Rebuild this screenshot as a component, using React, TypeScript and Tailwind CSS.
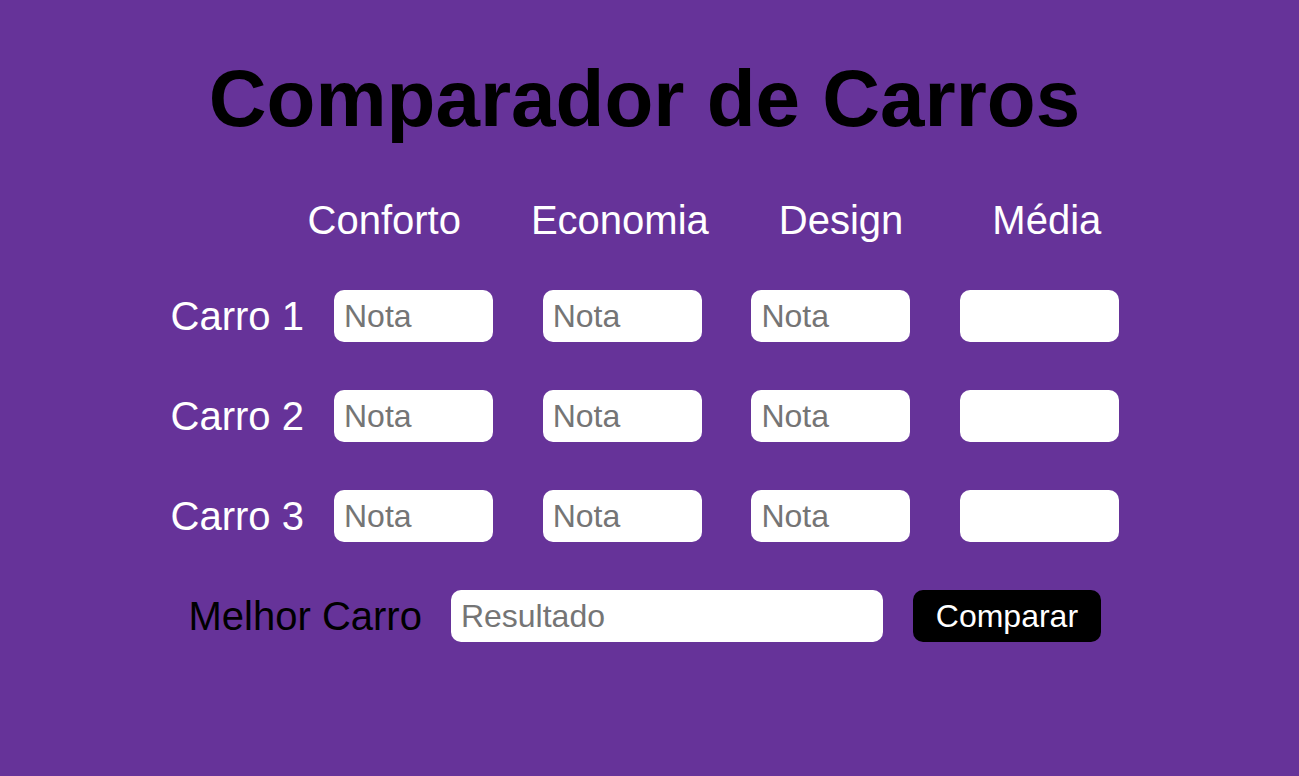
const criterios = ['Conforto', 'Economia', 'Design']

function NotaInput({ placeholder }: { placeholder?: string }) {
  return (
    <input
      type="text"
      placeholder={placeholder}
      className="h-[52px] w-[159px] rounded-[10px] bg-white pl-[10px] text-[32px] text-black outline-none placeholder:text-[#757575]"
    />
  )
}

export default function App() {
  return (
    <main className="min-h-screen bg-[#663399] font-['Liberation_Sans',Arial,sans-serif]">
      <h1 className="pr-[10px] pt-[53px] text-center text-[80px] font-bold leading-[92px] text-black">
        Comparador de Carros
      </h1>

      <div className="mx-auto mt-[52px] w-[960px] pl-[1px]">
        <div className="ml-[137px] flex gap-[70px] text-[40px] leading-[46px] text-white">
          {criterios.map((c) => (
            <span key={c}>{c}</span>
          ))}
          <span className="ml-[19px]">Média</span>
        </div>

        <div className="mt-[47px] flex flex-col gap-[48px]">
          {[1, 2, 3].map((n) => (
            <div key={n} className="flex items-center">
              <span className="w-[163.5px] text-[40px] leading-[46px] text-white">Carro {n}</span>
              <div className="flex gap-[49.7px]">
                <NotaInput placeholder="Nota" />
                <NotaInput placeholder="Nota" />
                <NotaInput placeholder="Nota" />
                <NotaInput />
              </div>
            </div>
          ))}

          <div className="flex items-center pl-[18px]">
            <span className="text-[40px] leading-[46px] text-black">Melhor Carro</span>
            <input
              type="text"
              placeholder="Resultado"
              className="ml-[29px] h-[52px] w-[432px] rounded-[10px] bg-white pl-[10px] text-[32px] text-black outline-none placeholder:text-[#757575]"
            />
            <button className="ml-[30px] h-[52px] w-[188px] rounded-[10px] bg-black text-[32px] text-white">
              Comparar
            </button>
          </div>
        </div>
      </div>
    </main>
  )
}
